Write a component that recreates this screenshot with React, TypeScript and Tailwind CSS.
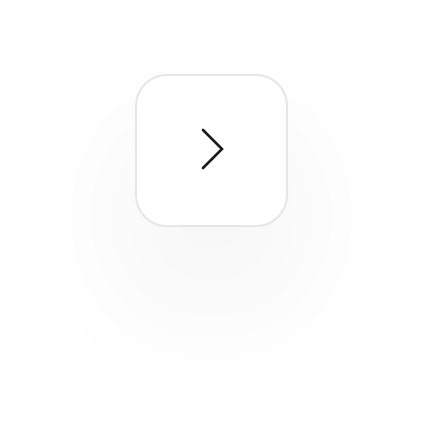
import React from "react";

export default function App() {
  return (
    <div className="w-[423px] h-[423px] bg-white flex justify-center pt-[74px]">
      <button
        type="button"
        className="w-[153px] h-[153px] rounded-[32px] border-2 border-[#e6e6e6] bg-white flex items-center justify-center shadow-[0_66px_110px_30px_rgba(0,0,0,0.03)]"
      >
        <svg width="24" height="42" viewBox="0 0 24 42" fill="none" className="-mt-[4px] ml-[2px]">
          <path d="M2 2 L21 21 L2 40" stroke="#1a1a1a" strokeWidth="2.6" strokeLinecap="round" strokeLinejoin="miter" />
        </svg>
      </button>
    </div>
  );
}
